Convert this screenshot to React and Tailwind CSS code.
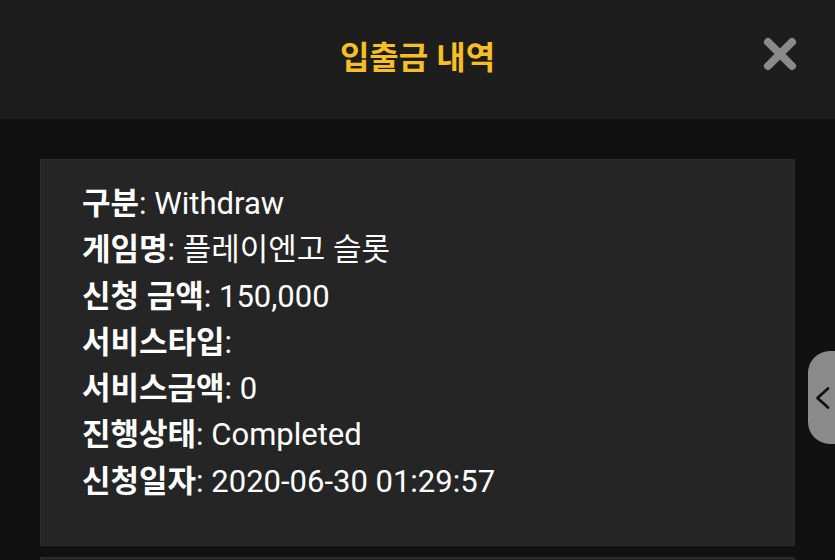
import React from 'react';

const rows = [
    { label: '구분', value: 'Withdraw' },
    { label: '게임명', value: '플레이엔고 슬롯' },
    { label: '신청 금액', value: '150,000' },
    { label: '서비스타입', value: '' },
    { label: '서비스금액', value: '0' },
    { label: '진행상태', value: 'Completed' },
    { label: '신청일자', value: '2020-06-30 01:29:57' },
];

const App = () => {
    return (
        <div
            className="relative h-[560px] w-[835px] overflow-hidden bg-[#111111]"
            style={{ fontFamily: "Roboto, 'Noto Sans CJK KR', sans-serif" }}
        >
            <header className="relative flex h-[119px] items-center justify-center bg-[#1d1d1d]">
                <h1 className="text-[32px] font-bold text-[#f6bf26] leading-none -mt-1">입출금 내역</h1>
                <button className="absolute right-[38px] top-[37px] h-[34px] w-[34px]">
                    <svg viewBox="0 0 34 34" className="h-full w-full">
                        <path d="M5 5 L29 29 M29 5 L5 29" stroke="#8a8a8a" strokeWidth="8" strokeLinecap="round" />
                    </svg>
                </button>
            </header>

            <div className="flex flex-col gap-[11px] px-[40px] pt-[40px]">
                <div className="border border-[#2c2c2c] bg-[#252525] pl-[41px] pt-[21px] pb-[40px]">
                    {rows.map((row) => (
                        <div key={row.label} className="text-[31px] leading-[46.3px] text-white">
                            <span className="font-bold">{row.label}</span>
                            <span>: {row.value}</span>
                        </div>
                    ))}
                </div>
                <div className="h-[40px] border border-[#2c2c2c] bg-[#252525]" />
            </div>

            <div className="absolute left-[808px] top-[351px] flex h-[93px] w-[40px] items-center rounded-l-[22px] bg-[#8a8a8a] pl-[7px]">
                <svg viewBox="0 0 16 24" className="h-[24px] w-[16px]">
                    <path d="M13 2.5 L2.5 12 L13 21.5" stroke="#111" strokeWidth="2.8" fill="none" strokeLinecap="round" strokeLinejoin="round" />
                </svg>
            </div>
        </div>
    );
};

export default App;
